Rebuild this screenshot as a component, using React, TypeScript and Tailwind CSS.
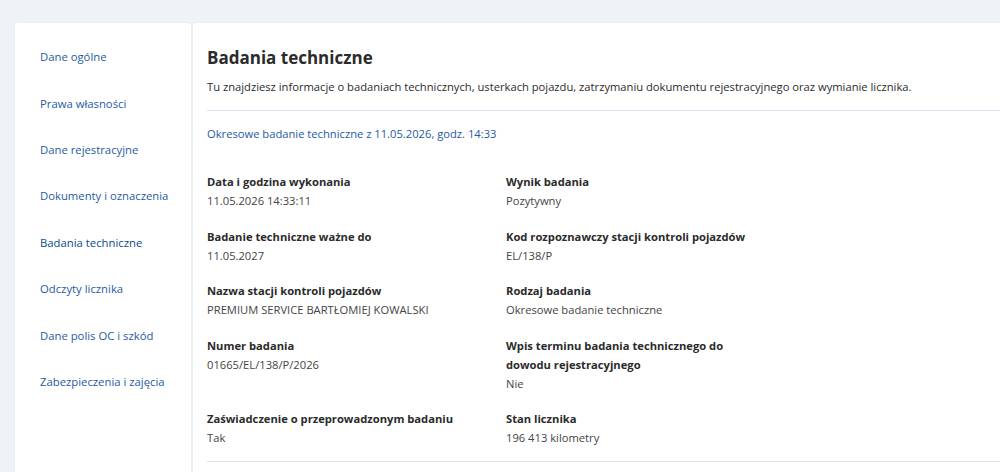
const NAV = [
  'Dane ogólne',
  'Prawa własności',
  'Dane rejestracyjne',
  'Dokumenty i oznaczenia',
  'Badania techniczne',
  'Odczyty licznika',
  'Dane polis OC i szkód',
  'Zabezpieczenia i zajęcia',
]

const ACTIVE = 'Badania techniczne'

type Field = { label: string; value: string }

const FIELDS: Field[] = [
  { label: 'Data i godzina wykonania', value: '11.05.2026 14:33:11' },
  { label: 'Wynik badania', value: 'Pozytywny' },
  { label: 'Badanie techniczne ważne do', value: '11.05.2027' },
  { label: 'Kod rozpoznawczy stacji kontroli pojazdów', value: 'EL/138/P' },
  { label: 'Nazwa stacji kontroli pojazdów', value: 'PREMIUM SERVICE BARTŁOMIEJ KOWALSKI' },
  { label: 'Rodzaj badania', value: 'Okresowe badanie techniczne' },
  { label: 'Numer badania', value: '01665/EL/138/P/2026' },
  { label: 'Wpis terminu badania technicznego do dowodu rejestracyjnego', value: 'Nie' },
  { label: 'Zaświadczenie o przeprowadzonym badaniu', value: 'Tak' },
  { label: 'Stan licznika', value: '196 413 kilometry' },
]

export default function App() {
  return (
    <div className="h-[472px] w-[1000px] overflow-hidden bg-[#eef3f8] font-['Open_Sans',sans-serif] text-[#2b2b2b]">
      <div className="flex gap-[2px] pl-[15px] pt-[23px]">
        <nav className="w-[176px] shrink-0 h-[460px] rounded-t-[3px] bg-white pl-[25px] pt-[11px] shadow-[0_0_3px_rgba(0,0,0,0.04)]">
          {NAV.map(item => (
            <a
              key={item}
              href="#"
              className={
                'flex h-[46.4px] items-center text-[11.3px] leading-[20px] ' +
                (item === ACTIVE ? 'text-[#0b4a8f] font-medium' : 'text-[#1f5aa3]')
              }
            >
              {item}
            </a>
          ))}
        </nav>

        <main className="w-[830px] shrink-0 h-[460px] rounded-tl-[3px] bg-white pl-[14px] pt-[22px] shadow-[0_0_3px_rgba(0,0,0,0.04)]">
          <h1 className="text-[17px] leading-[26px] font-bold text-[#2b2b2b]">Badania techniczne</h1>
          <p className="mt-[6px] text-[11.2px] leading-[20px] text-[#2b2b2b]">
            Tu znajdziesz informacje o badaniach technicznych, usterkach pojazdu, zatrzymaniu dokumentu rejestracyjnego oraz wymianie licznika.
          </p>
          <div className="mt-[13px] h-px bg-[#d6e2ee]" />

          <a href="#" className="mt-[13px] block text-[11.2px] leading-[20px] text-[#1f5aa3]">
            Okresowe badanie techniczne z 11.05.2026, godz. 14:33
          </a>

          <dl className="mt-[28px] grid grid-cols-[299px_240px] gap-y-[15.5px]">
            {FIELDS.map(f => (
              <div key={f.label}>
                <dt className="text-[11.2px] leading-[19px] font-bold text-[#2b2b2b]">{f.label}</dt>
                <dd className="text-[11.2px] leading-[20px] text-[#444]">{f.value}</dd>
              </div>
            ))}
          </dl>

          <div className="mt-[13px] h-px bg-[#d6e2ee]" />
        </main>
      </div>
    </div>
  )
}
